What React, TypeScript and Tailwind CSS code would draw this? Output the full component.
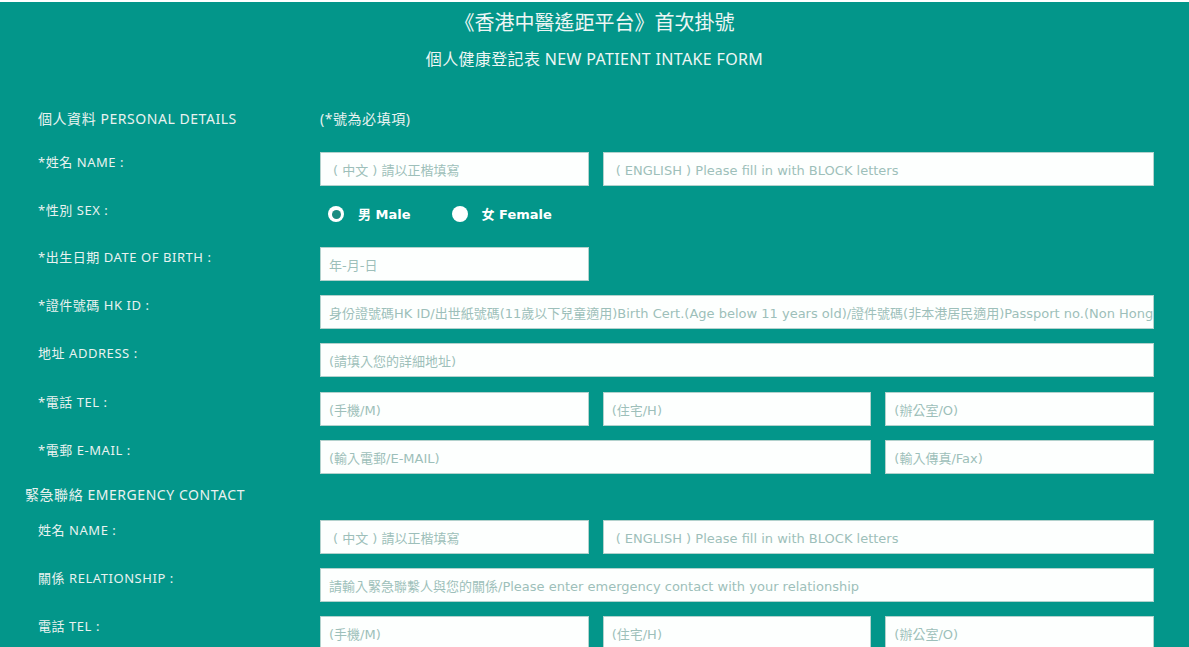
const sans = "font-['Noto_Sans','Noto_Sans_CJK_TC',sans-serif]"
const field =
  "h-[34px] w-full border border-[#b3d2cd] bg-[#fdfffe] pl-2 pt-[3px] text-[13px] text-[#333] placeholder:text-[#9dbfba] outline-none font-['DejaVu_Sans','Noto_Sans_CJK_TC',sans-serif]"
const labelCls = "w-[282px] shrink-0 text-[13px] leading-[20px] tracking-[0.55px] text-[#e9f2f0]"

function Row({ label, children }: { label: string; children: React.ReactNode }) {
  return (
    <div className="flex mb-[14.25px]">
      <div className={labelCls}>{label}</div>
      <div className="w-[834px]">{children}</div>
    </div>
  )
}

function Radio({ checked, label }: { checked?: boolean; label: string }) {
  return (
    <label className="flex items-center gap-[14px]">
      <span className="flex h-4 w-4 items-center justify-center rounded-full bg-white">
        {checked && <span className="h-[9px] w-[9px] rounded-full bg-[#1a8c80]" />}
      </span>
      <span className="text-[13px] font-bold text-white font-['DejaVu_Sans','Noto_Sans_CJK_TC',sans-serif]">
        {label}
      </span>
    </label>
  )
}

export default function App() {
  return (
    <div className={`min-h-[647px] border-t-2 border-white bg-[#03968a] ${sans}`}>
      {/* Header */}
      <div className="pt-[7px] text-center text-[#eef6f5]">
        <h1 className="text-[20px] leading-[28px]">《香港中醫遙距平台》首次掛號</h1>
        <p className="mt-[10px] text-[16px] leading-[24px] tracking-[0.35px]">個人健康登記表 NEW PATIENT INTAKE FORM</p>
      </div>

      <div className="pl-[38px] pt-[38px]">
        {/* Personal details */}
        <div className="flex mb-[23px] text-[14px] leading-[20px] tracking-[0.55px] text-[#e9f2f0]">
          <div className="w-[282px]">個人資料 PERSONAL DETAILS</div>
          <div>(*號為必填項)</div>
        </div>

        <Row label="*姓名 NAME :">
          <div className="grid grid-cols-3 gap-[14px]">
            <input className={`${field} pl-3`} placeholder="( 中文 ) 請以正楷填寫" />
            <input className={`${field} col-span-2 pl-3`} placeholder="( ENGLISH ) Please fill in with BLOCK letters" />
          </div>
        </Row>

        <div className="flex mb-[18.5px]">
          <div className={labelCls}>*性別 SEX :</div>
          <div className="flex h-[28px] items-center gap-[41px] pl-2">
            <Radio checked label="男 Male" />
            <Radio label="女 Female" />
          </div>
        </div>

        <Row label="*出生日期 DATE OF BIRTH :">
          <div className="grid grid-cols-3 gap-[14px]">
            <input className={field} placeholder="年-月-日" />
          </div>
        </Row>

        <Row label="*證件號碼 HK ID :">
          <input
            className={field}
            placeholder="身份證號碼HK ID/出世紙號碼(11歲以下兒童適用)Birth Cert.(Age below 11 years old)/證件號碼(非本港居民適用)Passport no.(Non Hong Kong residents)"
          />
        </Row>

        <Row label="地址 ADDRESS :">
          <input className={field} placeholder="(請填入您的詳細地址)" />
        </Row>

        <Row label="*電話 TEL :">
          <div className="grid grid-cols-3 gap-[14px]">
            <input className={field} placeholder="(手機/M)" />
            <input className={field} placeholder="(住宅/H)" />
            <input className={field} placeholder="(辦公室/O)" />
          </div>
        </Row>

        <div className="flex">
          <div className={labelCls}>*電郵 E-MAIL :</div>
          <div className="grid w-[834px] grid-cols-3 gap-[14px]">
            <input className={`${field} col-span-2`} placeholder="(輸入電郵/E-MAIL)" />
            <input className={field} placeholder="(輸入傳真/Fax)" />
          </div>
        </div>

        {/* Emergency contact */}
        <div className="-ml-[13px] h-[46px] pt-[11px] text-[14px] leading-[20px] tracking-[0.55px] text-[#e9f2f0]">
          緊急聯絡 EMERGENCY CONTACT
        </div>

        <Row label="姓名 NAME :">
          <div className="grid grid-cols-3 gap-[14px]">
            <input className={`${field} pl-3`} placeholder="( 中文 ) 請以正楷填寫" />
            <input className={`${field} col-span-2 pl-3`} placeholder="( ENGLISH ) Please fill in with BLOCK letters" />
          </div>
        </Row>

        <Row label="關係 RELATIONSHIP :">
          <input className={field} placeholder="請輸入緊急聯繫人與您的關係/Please enter emergency contact with your relationship" />
        </Row>

        <Row label="電話 TEL :">
          <div className="grid grid-cols-3 gap-[14px]">
            <input className={field} placeholder="(手機/M)" />
            <input className={field} placeholder="(住宅/H)" />
            <input className={field} placeholder="(辦公室/O)" />
          </div>
        </Row>
      </div>
    </div>
  )
}
